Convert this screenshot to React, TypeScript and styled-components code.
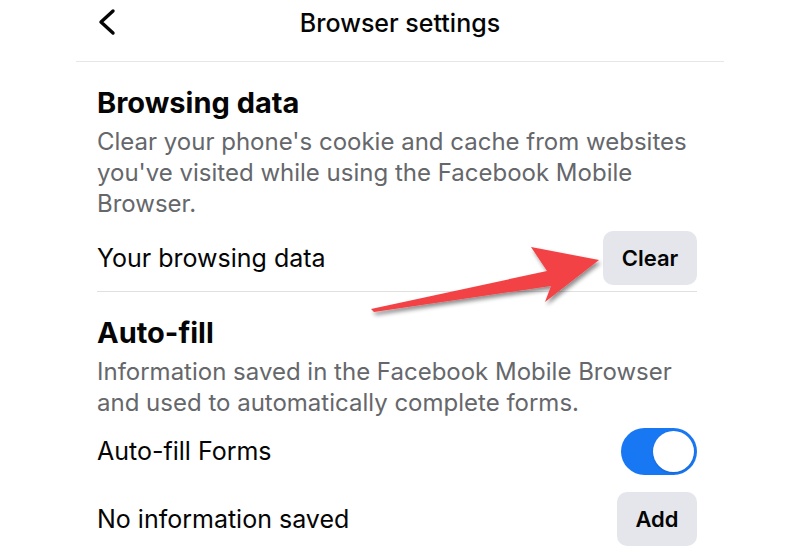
import React from "react";
import styled, { createGlobalStyle } from "styled-components";

const Global = createGlobalStyle`
  html, body { margin: 0; padding: 0; background: #ffffff; }
  body { font-family: Inter, "Liberation Sans", Arial, sans-serif; color: #050505; }
`;

const Page = styled.div`
  position: relative;
  width: 800px;
  height: 556px;
  overflow: hidden;
  background: #fff;
`;

const Panel = styled.div`
  width: 648px;
  margin: 0 auto;
`;

const Header = styled.header`
  position: relative;
  height: 61px;
  display: flex;
  align-items: center;
  justify-content: center;
  border-bottom: 1px solid #e6e6e6;
`;

const BackButton = styled.button`
  position: absolute;
  left: 20px;
  top: 8px;
  width: 24px;
  height: 28px;
  padding: 0;
  border: 0;
  background: none;
  display: flex;
  align-items: center;
  justify-content: center;
`;

const Title = styled.h1`
  margin: 0 0 16px;
  font-size: 25px;
  font-weight: 500;
  color: #050505;
`;

const Content = styled.main`
  padding: 0 27px 0 21px;
`;

const Section = styled.section`
  padding-top: 24px;
`;

const Heading = styled.h2`
  margin: 0;
  font-size: 29px;
  line-height: 34px;
  font-weight: 700;
  color: #050505;
`;

const Description = styled.p`
  margin: 6px 0 0;
  font-size: 24px;
  line-height: 31px;
  font-weight: 400;
  color: #65676b;
`;

const Row = styled.div<{ $pt: number; $pb: number; $divider?: boolean; $h?: number }>`
  display: flex;
  align-items: center;
  justify-content: space-between;
  padding: ${(p) => p.$pt}px 0 ${(p) => p.$pb}px;
  min-height: ${(p) => p.$h ?? 0}px;
  border-bottom: ${(p) => (p.$divider ? "1px solid #e0e0e0" : "none")};
`;

const Label = styled.span`
  font-size: 25px;
  font-weight: 400;
  color: #050505;
`;

const Pill = styled.button<{ $w: number }>`
  width: ${(p) => p.$w}px;
  height: 54px;
  border: 0;
  border-radius: 10px;
  background: #e4e6eb;
  font-family: inherit;
  font-size: 22px;
  font-weight: 600;
  color: #050505;
  padding: 0;
`;

const Toggle = styled.div`
  width: 76px;
  height: 47px;
  border-radius: 24px;
  background: #1877f2;
  display: flex;
  align-items: center;
  justify-content: flex-end;
  padding: 3px;
  box-sizing: border-box;
`;

const Knob = styled.div`
  width: 41px;
  height: 41px;
  border-radius: 50%;
  background: #ffffff;
  box-shadow: 0 1px 2px rgba(0, 0, 0, 0.15);
`;

const Overlay = styled.svg`
  position: absolute;
  left: 0;
  top: 0;
  pointer-events: none;
`;

export default function App() {
  return (
    <Page>
      <Global />
      <Panel>
        <Header>
          <BackButton aria-label="Back">
            <svg width="20" height="28" viewBox="0 0 20 28">
              <polyline
                points="15,3 3,14 15,25"
                fill="none"
                stroke="#050505"
                strokeWidth="3.4"
                strokeLinecap="round"
                strokeLinejoin="round"
              />
            </svg>
          </BackButton>
          <Title>Browser settings</Title>
        </Header>
        <Content>
          <Section>
            <Heading>Browsing data</Heading>
            <Description>
              Clear your phone's cookie and cache from websites you've visited while using the Facebook Mobile
              Browser.
            </Description>
            <Row $pt={12} $pb={6} $divider>
              <Label>Your browsing data</Label>
              <Pill $w={94}>Clear</Pill>
            </Row>
          </Section>
          <Section>
            <Heading>Auto-fill</Heading>
            <Description>
              Information saved in the Facebook Mobile Browser and used to automatically complete forms.
            </Description>
            <Row $pt={0} $pb={0} $h={66}>
              <Label>Auto-fill Forms</Label>
              <Toggle>
                <Knob />
              </Toggle>
            </Row>
            <Row $pt={0} $pb={0} $h={70}>
              <Label>No information saved</Label>
              <Pill $w={80}>Add</Pill>
            </Row>
          </Section>
        </Content>
      </Panel>
      <Overlay width="800" height="556" viewBox="0 0 800 556">
        <defs>
          <filter id="shadow" x="-10%" y="-30%" width="130%" height="170%">
            <feDropShadow dx="2" dy="3" stdDeviation="2" floodColor="#000" floodOpacity="0.45" />
          </filter>
        </defs>
        <polygon
          points="371,309 547,271 531,247 599,260 545,302 551,286 374,312"
          fill="#f34244"
          filter="url(#shadow)"
        />
      </Overlay>
    </Page>
  );
}
